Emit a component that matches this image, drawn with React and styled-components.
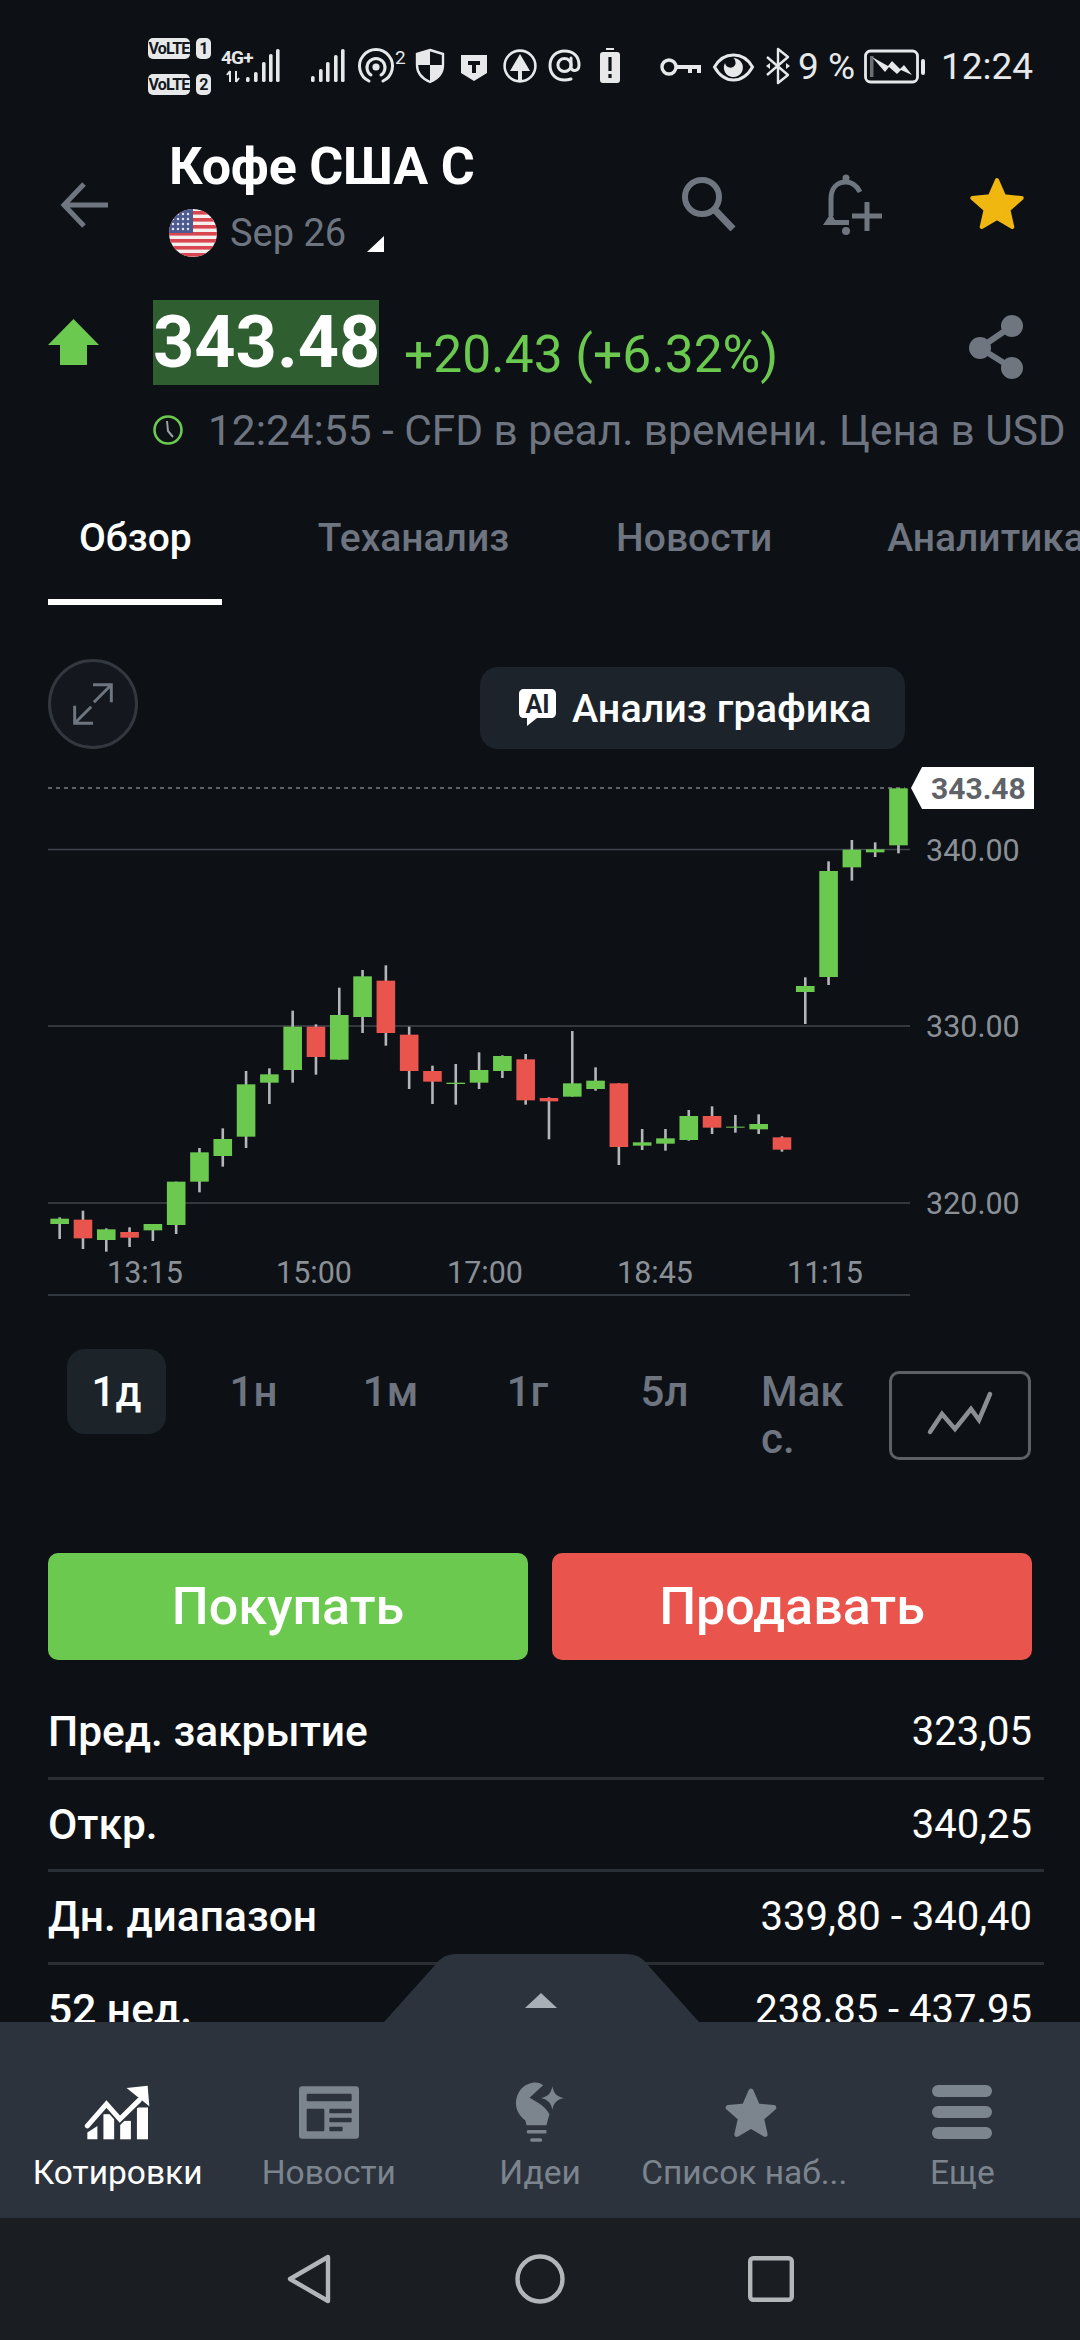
import React from 'react';
import styled, { createGlobalStyle } from 'styled-components';

const GREEN = '#6cc94f';
const RED = '#e9544d';
const MUTED = '#6e7580';
const ICON = '#6f7680';
const BG = '#0d1116';
const BAR = '#2c333d';
const STATUS = '#e6e8ea';

const GlobalStyle = createGlobalStyle`
  html, body {
    margin: 0;
    padding: 0;
    background: ${BG};
  }
  body {
    font-family: Roboto, "Noto Sans", sans-serif;
  }
`;

const Page = styled.div`
  width: 1080px;
  height: 2340px;
  display: flex;
  flex-direction: column;
  overflow: hidden;
  background: ${BG};
  color: #fff;
`;

const Main = styled.main`
  height: 2022px;
  flex: none;
  overflow: hidden;
`;

/* status bar */
const StatusBar = styled.div`
  height: 108px;
  box-sizing: border-box;
  padding: 38px 0 0 148px;
  display: flex;
  align-items: flex-start;
`;

const SimCol = styled.div`
  width: 63px;
  display: flex;
  flex-direction: column;
  gap: 15px;
`;

const SimRow = styled.div`
  display: flex;
  justify-content: space-between;
`;

const SimBadge = styled.span`
  height: 21px;
  width: ${(p) => p.$w}px;
  border-radius: 5px;
  background: ${STATUS};
  color: #14181d;
  font-size: 16px;
  font-weight: 700;
  line-height: 21px;
  text-align: center;
  letter-spacing: -0.8px;
`;

const StatusIcon = styled.svg`
  display: block;
  flex: none;
  margin: 10px 0 0 ${(p) => p.$ml}px;
  color: ${STATUS};
  overflow: visible;
`;

const StatusText = styled.span`
  flex: none;
  margin: 8px 0 0 ${(p) => p.$ml}px;
  width: ${(p) => p.$w}px;
  font-size: 37px;
  line-height: 42px;
  color: ${STATUS};
  white-space: pre;
`;

/* instrument header */
const Header = styled.header`
  height: 172px;
  padding: 0 0 0 60px;
  display: flex;
  position: relative;
`;

const BackIcon = styled.svg`
  flex: none;
  margin-top: 74px;
`;

const TitleBlock = styled.div`
  width: 500px;
  margin-left: 61px;
  padding-top: 29px;
`;

const Title = styled.h1`
  margin: 0;
  font-size: 52px;
  line-height: 60px;
  font-weight: 700;
  letter-spacing: -0.2px;
`;

const SubRow = styled.div`
  display: flex;
  align-items: center;
  margin-top: 12px;
  height: 48px;
`;

const Expiry = styled.span`
  margin-left: 13px;
  font-size: 38px;
  color: ${MUTED};
`;

const Corner = styled.i`
  width: 0;
  height: 0;
  margin: 22px 0 0 21px;
  border-style: solid;
  border-width: 0 0 16px 17px;
  border-color: transparent transparent #fff transparent;
`;

const HeaderIcons = styled.div`
  position: absolute;
  top: 66px;
  left: 682px;
  display: flex;
  align-items: flex-start;
`;

const HeaderIcon = styled.svg`
  display: block;
  flex: none;
  margin-left: ${(p) => p.$ml}px;
  margin-top: ${(p) => p.$mt}px;
`;

/* quote */
const PriceRow = styled.div`
  margin-top: 20px;
  height: 85px;
  padding: 0 56px 0 48px;
  display: flex;
  align-items: center;
`;

const UpArrow = styled.svg`
  flex: none;
  margin-top: -1px;
`;

const Price = styled.div`
  margin-left: 54px;
  height: 85px;
  width: 226px;
  background: #2f5f30;
  font-size: 72px;
  line-height: 85px;
  font-weight: 700;
  text-align: center;
`;

const Change = styled.div`
  margin: 24px 0 0 25px;
  font-size: 51.5px;
  color: ${GREEN};
  flex: 1;
  white-space: nowrap;
`;

const ShareIcon = styled.svg`
  flex: none;
  margin-top: 8px;
`;

const MetaRow = styled.div`
  margin-top: 20px;
  padding-left: 153px;
  display: flex;
  align-items: center;
  height: 50px;
  gap: 25px;
`;

const MetaText = styled.span`
  font-size: 42.4px;
  color: ${MUTED};
  white-space: nowrap;
`;

/* tabs */
const Tabs = styled.nav`
  margin-top: 40px;
  height: 160px;
  box-sizing: border-box;
  position: relative;
  display: flex;
  white-space: nowrap;
`;

const Tab = styled.span`
  position: relative;
  flex: none;
  margin-left: ${(p) => p.$ml}px;
  padding-top: 18px;
  font-size: 39px;
  line-height: 50px;
  font-weight: 500;
  color: ${(p) => (p.$active ? '#fff' : MUTED)};
  &::after {
    content: '';
    display: ${(p) => (p.$active ? 'block' : 'none')};
    position: absolute;
    left: -31px;
    right: -30px;
    top: 104px;
    height: 6px;
    background: #fff;
  }
`;

/* chart */
const ChartTools = styled.div`
  margin-top: 4px;
  height: 101px;
  padding: 0 175px 0 48px;
  display: flex;
  justify-content: space-between;
  align-items: flex-start;
`;

const ExpandButton = styled.button`
  width: 90px;
  height: 90px;
  padding: 0;
  border-radius: 50%;
  border: 3px solid #33383f;
  background: #14181e;
  display: flex;
  align-items: center;
  justify-content: center;
`;

const AiButton = styled.button`
  margin-top: 8px;
  width: 425px;
  height: 82px;
  border: 0;
  border-radius: 18px;
  background: #1d232b;
  color: #fff;
  font-family: inherit;
  font-size: 39.5px;
  font-weight: 500;
  display: flex;
  align-items: center;
  padding: 0 0 0 38px;
  gap: 15px;
`;

const ChartSvg = styled.svg`
  display: block;
`;

const AxisText = styled.text`
  font-size: 30.5px;
  fill: #8b9097;
`;

const TagText = styled.text`
  font-size: 30px;
  font-weight: 700;
  fill: #5f6368;
`;

const RangeRow = styled.div`
  margin-top: 29px;
  height: 204px;
  padding-left: 67px;
  display: flex;
  align-items: flex-start;
  gap: 38px;
`;

const RangeItem = styled.div`
  width: 99px;
  height: 85px;
  box-sizing: border-box;
  padding: 19px ${(p) => (p.$left ? '0 0 9px' : '0 0')};
  flex: none;
  border-radius: 18px;
  background: ${(p) => (p.$active ? '#1c2329' : 'transparent')};
  color: ${(p) => (p.$active ? '#fff' : MUTED)};
  font-size: 42px;
  line-height: 47px;
  font-weight: 500;
  text-align: ${(p) => (p.$left ? 'left' : 'center')};
  white-space: nowrap;
`;

const ChartType = styled.div`
  flex: none;
  width: 142px;
  height: 89px;
  box-sizing: border-box;
  margin: 22px 0 0 0;
  border: 3px solid #5c6168;
  border-radius: 10px;
`;

const TradeRow = styled.div`
  padding: 0 48px;
  display: flex;
  gap: 24px;
`;

const TradeButton = styled.button`
  flex: 1;
  height: 107px;
  border: 0;
  border-radius: 10px;
  background: ${(p) => p.$bg};
  color: #fff;
  font-family: inherit;
  font-size: 52px;
  font-weight: 500;
  padding: 0;
`;

const Stats = styled.div`
  margin: 27px 36px 0 48px;
`;

const StatRow = styled.div`
  height: 92.5px;
  box-sizing: border-box;
  padding-right: 12px;
  border-bottom: 3px solid ${(p) => (p.$last ? 'transparent' : '#2a2f36')};
  display: flex;
  align-items: center;
  justify-content: space-between;
  font-size: 40px;
`;

const StatLabel = styled.span`
  font-weight: 500;
  font-size: 42.5px;
`;

/* bottom bar */
const Footer = styled.footer`
  position: relative;
  height: 196px;
  box-sizing: border-box;
  padding: 60px 12px 0;
  background: ${BAR};
  display: grid;
  grid-template-columns: repeat(5, minmax(0, 1fr));
`;

const Notch = styled.div`
  position: absolute;
  left: 384px;
  top: -68px;
  width: 315px;
  height: 68px;
`;

const NotchArrow = styled.i`
  position: absolute;
  left: 141px;
  top: 39px;
  width: 0;
  height: 0;
  border-style: solid;
  border-width: 0 16px 15px 16px;
  border-color: transparent transparent #a9afb7 transparent;
`;

const FooterTab = styled.div`
  display: flex;
  flex-direction: column;
  align-items: center;
  color: ${(p) => (p.$active ? '#fff' : '#7c848e')};
`;

const FooterIconBox = styled.div`
  height: 60px;
  display: flex;
  align-items: center;
  justify-content: center;
`;

const FooterLabel = styled.span`
  margin-top: 9px;
  margin-right: ${(p) => p.$pull || 0}px;
  font-size: 33.5px;
  line-height: 44px;
  white-space: nowrap;
`;

const NavBar = styled.div`
  flex: 1;
  background: #1a1e23;
  display: grid;
  grid-template-columns: repeat(3, 231px);
  justify-content: center;
  align-items: center;
  justify-items: center;
`;

// zoomed-in coordinates of the candles: high, low, open/close top, open/close bottom
const candles = [
  [1372, 1437, 1376, 1392, 'g'], [1352, 1467, 1379, 1435, 'r'], [1405, 1475, 1408, 1440, 'g'],
  [1402, 1461, 1416, 1433, 'r'], [1392, 1443, 1392, 1411, 'g'], [1265, 1422, 1265, 1395, 'g'],
  [1164, 1297, 1177, 1265, 'g'], [1105, 1220, 1137, 1188, 'g'], [933, 1164, 973, 1130, 'g'],
  [925, 1032, 943, 968, 'g'], [752, 968, 800, 930, 'g'], [793, 944, 800, 891, 'r'],
  [683, 899, 765, 899, 'g'], [630, 819, 649, 771, 'g'], [616, 857, 662, 819, 'r'],
  [800, 987, 824, 933, 'r'], [917, 1032, 933, 965, 'r'], [912, 1034, 968, 972, 'g'],
  [877, 987, 930, 968, 'g'], [886, 954, 888, 933, 'g'], [882, 1034, 898, 1021, 'r'],
  [1012, 1138, 1014, 1024, 'r'], [813, 1010, 970, 1010, 'g'], [922, 992, 962, 987, 'g'],
  [970, 1215, 970, 1161, 'r'], [1107, 1170, 1147, 1157, 'g'], [1107, 1172, 1135, 1151, 'g'],
  [1050, 1142, 1068, 1140, 'g'], [1039, 1122, 1068, 1103, 'r'], [1065, 1118, 1100, 1103, 'g'],
  [1063, 1122, 1092, 1108, 'g'], [1129, 1175, 1132, 1169, 'r'], [652, 792, 678, 696, 'g'],
  [304, 675, 333, 651, 'g'], [240, 362, 269, 322, 'g'], [247, 291, 268, 277, 'g'],
  [85, 280, 85, 256, 'g'],
];

const grid = [
  { y: 89.5, label: '340.00' },
  { y: 266, label: '330.00' },
  { y: 443, label: '320.00' },
];

const times = [
  { x: 145, label: '13:15' },
  { x: 314, label: '15:00' },
  { x: 485, label: '17:00' },
  { x: 655, label: '18:45' },
  { x: 825, label: '11:15' },
];

const starPoints = (cx, cy, R, r) => {
  const pts = [];
  for (let i = 0; i < 10; i++) {
    const rad = i % 2 === 0 ? R : r;
    const a = (-90 + i * 36) * (Math.PI / 180);
    pts.push(`${(cx + rad * Math.cos(a)).toFixed(1)},${(cy + rad * Math.sin(a)).toFixed(1)}`);
  }
  return pts.join(' ');
};

const Chart = () => (
  <ChartSvg width="1080" height="560" viewBox="0 0 1080 560">
    <line x1="48" x2="905" y1="28" y2="28" stroke="#7a7f86" strokeWidth="1.5" strokeDasharray="4 4" />
    {grid.map((g) => (
      <g key={g.label}>
        <line x1="48" x2="910" y1={g.y} y2={g.y} stroke="#41464d" strokeWidth="1.5" />
        <AxisText x="926" y={g.y + 11}>{g.label}</AxisText>
      </g>
    ))}
    <line x1="48" x2="910" y1="535" y2="535" stroke="#41464d" strokeWidth="1.5" />
    {times.map((t) => (
      <AxisText key={t.label} x={t.x} y="523" textAnchor="middle">{t.label}</AxisText>
    ))}
    {candles.map(([high, low, top, bottom, side], i) => {
      const x = 59.67 + 23.3 * i;
      return (
        <g key={i}>
          <line x1={x} x2={x} y1={high / 3} y2={low / 3} stroke="#b4b6b9" strokeWidth="2.6" />
          <rect x={x - 9.3} y={top / 3} width="18.6" height={(bottom - top) / 3} fill={side === 'g' ? GREEN : RED} />
        </g>
      );
    })}
    <polygon points="911,28 922,7 1034,7 1034,49 922,49" fill="#fff" />
    <TagText x="931" y="39">343.48</TagText>
  </ChartSvg>
);

const Bars = ({ x, h }) => (
  <g fill="currentColor">
    {x.map((bx, i) => (
      <rect key={bx} x={bx} y={34 - h[i]} width="3.6" height={h[i]} rx="1.6" />
    ))}
  </g>
);

const StatusIcons = () => (
  <>
    <StatusIcon $ml="10" width="59" height="36" viewBox="0 0 59 36">
      <text x="0" y="16" fontSize="19" fontWeight="700" fill="currentColor" letterSpacing="-0.8">4G+</text>
      <path d="M9 23v11M9 23l-3 4M15 34V23M15 34l3-4" stroke="currentColor" strokeWidth="2" fill="none" />
      <Bars x={[25, 33, 41, 48, 55]} h={[5, 10, 20, 28, 33]} />
    </StatusIcon>
    <StatusIcon $ml="30" width="35" height="36" viewBox="0 0 35 36">
      <Bars x={[1, 9, 16, 24, 31]} h={[6, 13, 20, 27, 33]} />
    </StatusIcon>
    <StatusIcon $ml="12" width="49" height="36" viewBox="0 0 49 36">
      <g fill="none" stroke="currentColor" strokeWidth="3" strokeLinecap="round">
        <path d="M12 33A16.5 16.5 0 1 1 26 33" />
        <path d="M14 27A9 9 0 1 1 24 27" />
      </g>
      <circle cx="19" cy="19" r="3.6" fill="currentColor" />
      <text x="38" y="16" fontSize="19" fill="currentColor">2</text>
    </StatusIcon>
    <StatusIcon $ml="10" width="28" height="36" viewBox="0 0 28 36">
      <path d="M14 2L27 6V17C27 26 21 31 14 34C7 31 1 26 1 17V6Z" fill="none" stroke="currentColor" strokeWidth="2.4" />
      <path d="M14 2V17H1V6ZM14 17H27C27 26 21 31 14 34Z" fill="currentColor" />
    </StatusIcon>
    <StatusIcon $ml="16" width="28" height="36" viewBox="0 0 28 36">
      <path d="M1 7H27V25L14 33L1 25Z" fill="currentColor" />
      <path d="M8 13H20V17H16V25H12V17H8Z" fill="#0d1116" />
    </StatusIcon>
    <StatusIcon $ml="15" width="34" height="36" viewBox="0 0 34 36">
      <circle cx="17" cy="18" r="15.4" fill="none" stroke="currentColor" strokeWidth="2.6" />
      <path d="M17 6L27 23H19V32H15V23H7Z" fill="currentColor" />
    </StatusIcon>
    <StatusIcon $ml="11" width="33" height="36" viewBox="0 0 33 36">
      <circle cx="16.5" cy="17" r="6.6" fill="none" stroke="currentColor" strokeWidth="3" />
      <path d="M23 10V19C23 24 31 24 31 17C31 8 25 3 16.5 3C8 3 2 9 2 17.5C2 27 9 32 16.5 32C19 32 21 31.6 23 31" fill="none" stroke="currentColor" strokeWidth="3" strokeLinecap="round" />
    </StatusIcon>
    <StatusIcon $ml="19" width="20" height="36" viewBox="0 0 20 36">
      <rect x="6" y="0" width="8" height="2" fill="currentColor" />
      <rect x="0" y="4" width="20" height="31" rx="3" fill="currentColor" />
      <rect x="8.4" y="9" width="3.2" height="14" fill="#0d1116" />
      <rect x="8.4" y="26" width="3.2" height="4" fill="#0d1116" />
    </StatusIcon>
    <StatusIcon $ml="40" width="41" height="36" viewBox="0 0 41 36">
      <circle cx="9" cy="19" r="7" fill="none" stroke="currentColor" strokeWidth="3.4" />
      <path d="M16 17H41V25H37V21H32V25H28V21H16Z" fill="currentColor" />
    </StatusIcon>
    <StatusIcon $ml="12" width="41" height="36" viewBox="0 0 41 36">
      <path d="M1.5 19C6 11 13 7 20.5 7S35 11 39.5 19C35 27 28 32 20.5 32S6 27 1.5 19Z" fill="none" stroke="currentColor" strokeWidth="3" />
      <path d="M20.5 10A9.5 9.5 0 1 1 12 15C13 21 21 21 22.5 16C22.8 14 22 11 20.5 10Z" fill="currentColor" />
    </StatusIcon>
    <StatusIcon $ml="11" width="26" height="36" viewBox="0 0 26 36">
      <path d="M2 9L23 27L13 35V1L23 9L2 27" fill="none" stroke="currentColor" strokeWidth="2.4" strokeLinejoin="round" />
      <path d="M21 15L25 18L21 21Z M5 15L1 18L5 21Z" fill="currentColor" />
    </StatusIcon>
    <StatusText $ml="7" $w="57">9 %</StatusText>
    <StatusIcon $ml="9" width="61" height="36" viewBox="0 0 61 36">
      <rect x="1.5" y="3" width="52" height="31" rx="5" fill="none" stroke="currentColor" strokeWidth="2.8" />
      <rect x="6" y="8" width="3.5" height="21" fill="#6b6f74" />
      <path d="M8 9L24 18L28 13L36 21L40 17L48 27L37 22L33 26L25 19L21 24Z" fill="currentColor" />
      <rect x="57" y="11" width="4" height="16" rx="2" fill="currentColor" />
    </StatusIcon>
    <StatusText $ml="16" $w="90">12:24</StatusText>
  </>
);

const FlagIcon = () => (
  <svg width="48" height="48" viewBox="0 0 48 48">
    <defs>
      <clipPath id="flag-clip">
        <circle cx="24" cy="24" r="24" />
      </clipPath>
    </defs>
    <g clipPath="url(#flag-clip)">
      <rect width="48" height="48" fill="#f4f0f0" />
      {[4, 11, 18, 25, 32, 39, 46].map((y) => (
        <rect key={y} y={y - 2} width="48" height="3.6" fill="#d9464f" />
      ))}
      <rect width="24" height="24" fill="#4d5a8f" />
      {[5, 10, 15, 20].map((y) =>
        [4, 9, 14, 19].map((x) => <circle key={`${x}-${y}`} cx={x} cy={y} r="1.2" fill="#e6e8f2" />)
      )}
    </g>
  </svg>
);

const footerIcons = {
  quotes: (
    <svg width="67" height="57" viewBox="75 40 200 170">
      <g fill="currentColor">
        <path d="M85 205V185L115 165V205Z" />
        <rect x="133" y="130" width="32" height="75" />
        <rect x="183" y="150" width="32" height="55" />
        <rect x="233" y="110" width="33" height="95" />
      </g>
      <path d="M85 165L142 100L182 145L240 88" fill="none" stroke={BAR} strokeWidth="26" />
      <path d="M85 165L142 100L182 145L240 88" fill="none" stroke="currentColor" strokeWidth="15" strokeLinecap="round" />
      <path d="M202 52L265 45L270 106Z" fill="currentColor" />
    </svg>
  ),
  news: (
    <svg width="60" height="53" viewBox="717 47 180 158">
      <rect x="717" y="47" width="180" height="158" rx="10" fill="currentColor" />
      <g fill={BAR}>
        <rect x="740" y="70" width="135" height="22" rx="3" />
        <rect x="740" y="115" width="53" height="67" rx="3" />
        <rect x="808" y="115" width="67" height="13" rx="3" />
        <rect x="808" y="142" width="67" height="13" rx="3" />
        <rect x="808" y="169" width="40" height="13" rx="3" />
      </g>
    </svg>
  ),
  ideas: (
    <svg width="48" height="60" viewBox="90 35 145 180">
      <g fill="currentColor">
        <path d="M150 36C115 36 90 64 90 100C90 122 104 140 118 150L122 165H182L191 132C182 112 160 98 131 82L172 44C165 39 158 36 150 36Z" />
        <rect x="123" y="179" width="59" height="11" rx="3" />
        <rect x="133" y="204" width="36" height="11" rx="5" />
        <path d="M200 47C204 68 212 78 235 83C212 88 204 98 200 118C196 98 187 88 165 83C187 78 196 68 200 47Z" />
      </g>
    </svg>
  ),
  star: (
    <svg width="54" height="54" viewBox="0 0 54 54">
      <polygon points={starPoints(27, 30, 24, 11)} fill="currentColor" stroke="currentColor" strokeWidth="5" strokeLinejoin="round" />
    </svg>
  ),
  more: (
    <svg width="60" height="54" viewBox="0 0 60 54">
      <rect y="0" width="60" height="12" rx="6" fill="currentColor" />
      <rect y="21" width="60" height="12" rx="6" fill="currentColor" />
      <rect y="42" width="60" height="12" rx="6" fill="currentColor" />
    </svg>
  ),
};

const footerTabs = [
  { id: 'quotes', label: 'Котировки', active: true },
  { id: 'news', label: 'Новости' },
  { id: 'ideas', label: 'Идеи' },
  { id: 'star', label: 'Список наб...', pull: 14 },
  { id: 'more', label: 'Еще' },
];

const stats = [
  { label: 'Пред. закрытие', value: '323,05' },
  { label: 'Откр.', value: '340,25' },
  { label: 'Дн. диапазон', value: '339,80 - 340,40' },
  { label: '52 нед.', value: '238.85 - 437.95', last: true },
];

const App = () => (
  <Page>
    <GlobalStyle />
    <Main>
      <StatusBar>
        <SimCol>
          <SimRow>
            <SimBadge $w="42">VoLTE</SimBadge>
            <SimBadge $w="15">1</SimBadge>
          </SimRow>
          <SimRow>
            <SimBadge $w="42">VoLTE</SimBadge>
            <SimBadge $w="15">2</SimBadge>
          </SimRow>
        </SimCol>
        <StatusIcons />
      </StatusBar>

      <Header>
        <BackIcon width="48" height="46" viewBox="0 0 48 46">
          <path d="M48 23H5M24 2L4 23L24 44" fill="none" stroke={ICON} strokeWidth="5" />
        </BackIcon>
        <TitleBlock>
          <Title>Кофе США С</Title>
          <SubRow>
            <FlagIcon />
            <Expiry>Sep 26</Expiry>
            <Corner />
          </SubRow>
        </TitleBlock>
        <HeaderIcons>
          <HeaderIcon $ml="0" $mt="3" width="54" height="54" viewBox="0 0 54 54">
            <circle cx="20" cy="20" r="17" fill="none" stroke={ICON} strokeWidth="6" />
            <path d="M32 32L51 52" stroke={ICON} strokeWidth="7" />
          </HeaderIcon>
          <HeaderIcon $ml="85" $mt="0" width="62" height="62" viewBox="0 0 62 62">
            <circle cx="25" cy="4" r="3.5" fill={ICON} />
            <path d="M10 42V25C10 14 16 8 25 8C32 8 36 12 39 18" fill="none" stroke={ICON} strokeWidth="5" />
            <path d="M2 51L10 39L14 46H28V51Z" fill={ICON} />
            <circle cx="25" cy="57" r="4" fill={ICON} />
            <path d="M46 28V57M31 42H61" stroke={ICON} strokeWidth="5" />
          </HeaderIcon>
          <HeaderIcon $ml="86" $mt="3" width="56" height="54" viewBox="0 0 56 54">
            <polygon points={starPoints(28, 29, 26, 12)} fill="#efb70f" stroke="#efb70f" strokeWidth="4" strokeLinejoin="round" />
          </HeaderIcon>
        </HeaderIcons>
      </Header>

      <PriceRow>
        <UpArrow width="51" height="46" viewBox="0 0 51 46">
          <path d="M25.5 0L51 26H39V46H12V26H0Z" fill={GREEN} />
        </UpArrow>
        <Price>343.48</Price>
        <Change>+20.43 (+6.32%)</Change>
        <ShareIcon width="56" height="64" viewBox="0 0 56 64">
          <path d="M44 11L12 33L44 53" fill="none" stroke={ICON} strokeWidth="6" />
          <circle cx="44" cy="11" r="11" fill={ICON} />
          <circle cx="12" cy="33" r="11" fill={ICON} />
          <circle cx="44" cy="53" r="11" fill={ICON} />
        </ShareIcon>
      </PriceRow>

      <MetaRow>
        <svg width="30" height="30" viewBox="0 0 30 30">
          <circle cx="15" cy="15" r="13.5" fill="none" stroke={GREEN} strokeWidth="2.6" />
          <path d="M14 6L15 16L20 22" fill="none" stroke="#9aa0a6" strokeWidth="2" />
        </svg>
        <MetaText>12:24:55 - CFD в реал. времени. Цена в USD</MetaText>
      </MetaRow>

      <Tabs>
        <Tab $active $ml="79">Обзор</Tab>
        <Tab $ml="126">Теханализ</Tab>
        <Tab $ml="107">Новости</Tab>
        <Tab $ml="115">Аналитика</Tab>
      </Tabs>

      <ChartTools>
        <ExpandButton aria-label="expand">
          <svg width="44" height="44" viewBox="0 0 48 48">
            <path d="M24 3H44V22M44 3L25 22" fill="none" stroke={ICON} strokeWidth="3.2" />
            <path d="M4 26V45H24M4 45L22 27" fill="none" stroke={ICON} strokeWidth="3.2" />
          </svg>
        </ExpandButton>
        <AiButton>
          <svg width="39" height="40" viewBox="0 0 39 40">
            <path d="M6 1H33C36 1 38 3 38 6V25C38 28 36 30 33 30H19L9 38V30H6C3 30 1 28 1 25V6C1 3 3 1 6 1Z" fill="#fff" />
            <text x="19.5" y="25" fontSize="25" fontWeight="700" fill="#1d232b" textAnchor="middle">AI</text>
          </svg>
          Анализ графика
        </AiButton>
      </ChartTools>

      <Chart />

      <RangeRow>
        <RangeItem $active>1д</RangeItem>
        <RangeItem>1н</RangeItem>
        <RangeItem>1м</RangeItem>
        <RangeItem>1г</RangeItem>
        <RangeItem>5л</RangeItem>
        <RangeItem $left>Мак<br />с.</RangeItem>
        <ChartType>
          <svg width="136" height="83" viewBox="0 0 136 83">
            <path d="M38 58L50 40L63 55L79 35L87 46L98 20" fill="none" stroke="#8b8f94" strokeWidth="4.5" strokeLinecap="round" />
          </svg>
        </ChartType>
      </RangeRow>

      <TradeRow>
        <TradeButton $bg={GREEN}>Покупать</TradeButton>
        <TradeButton $bg={RED}>Продавать</TradeButton>
      </TradeRow>

      <Stats>
        {stats.map((s) => (
          <StatRow key={s.label} $last={s.last}>
            <StatLabel>{s.label}</StatLabel>
            <span>{s.value}</span>
          </StatRow>
        ))}
      </Stats>
    </Main>

    <Footer>
      <Notch>
        <svg width="315" height="68" viewBox="0 0 315 68">
          <path d="M0 68L52 10Q59 0 72 0H243Q256 0 263 10L315 68Z" fill={BAR} />
        </svg>
        <NotchArrow />
      </Notch>
      {footerTabs.map((t) => (
        <FooterTab key={t.id} $active={t.active}>
          <FooterIconBox>{footerIcons[t.id]}</FooterIconBox>
          <FooterLabel $pull={t.pull}>{t.label}</FooterLabel>
        </FooterTab>
      ))}
    </Footer>

    <NavBar>
      <svg width="44" height="50" viewBox="0 0 44 50">
        <path d="M41 3L3 25L41 47Z" fill="none" stroke="#b3b6b9" strokeWidth="4.4" strokeLinejoin="round" />
      </svg>
      <svg width="50" height="50" viewBox="0 0 50 50">
        <circle cx="25" cy="25" r="22.5" fill="none" stroke="#b3b6b9" strokeWidth="4.4" />
      </svg>
      <svg width="46" height="46" viewBox="0 0 46 46">
        <rect x="2.2" y="2.2" width="41.6" height="41.6" rx="3" fill="none" stroke="#b3b6b9" strokeWidth="4.4" />
      </svg>
    </NavBar>
  </Page>
);

export default App;
